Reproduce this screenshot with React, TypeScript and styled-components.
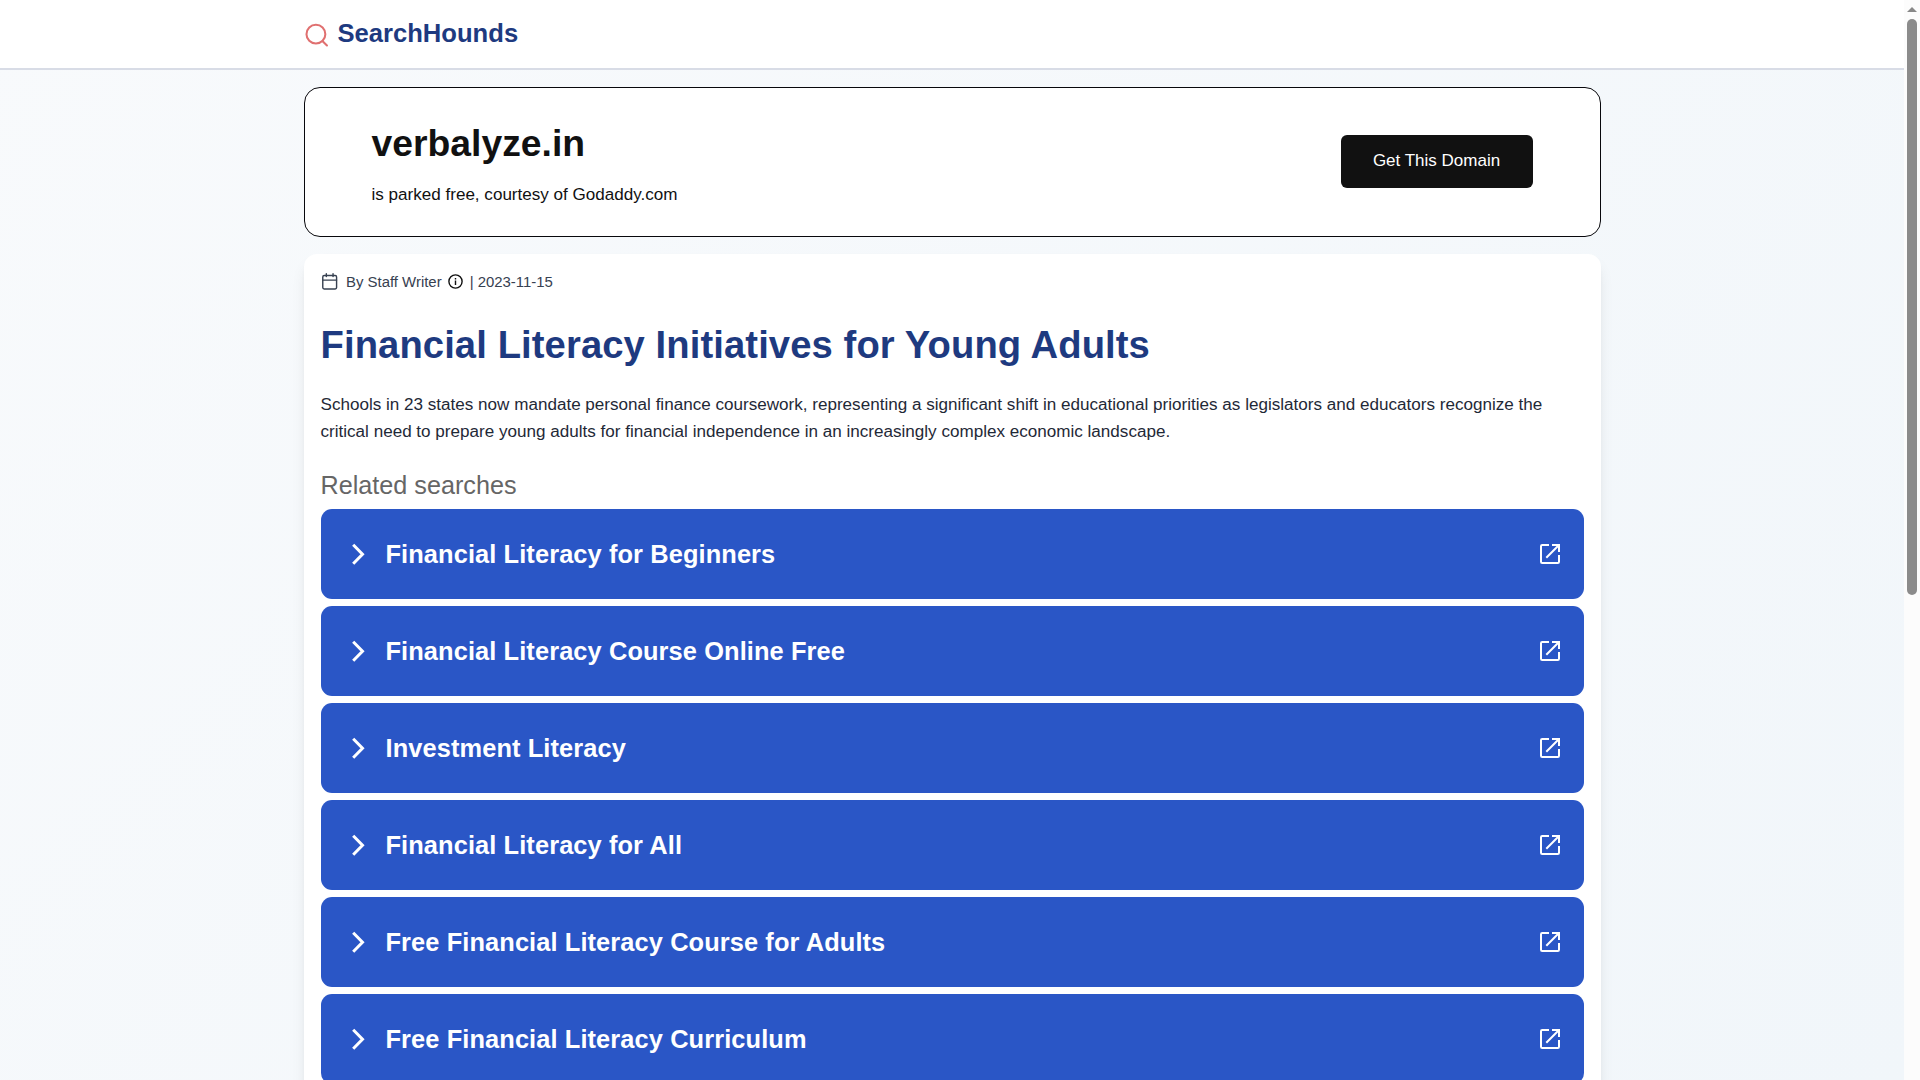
import React from "react";
import styled, { createGlobalStyle } from "styled-components";

const GlobalStyle = createGlobalStyle`
  * { box-sizing: border-box; }
  body { margin: 0; overflow: hidden; font-family: "Liberation Sans", Arial, sans-serif; }
  h1, h2, p { margin: 0; }
`;

const Window = styled.div`
  display: flex;
  width: 1920px;
  height: 1080px;
  overflow: hidden;
`;
const Page = styled.div`
  flex: 1;
  min-width: 0;
  display: flex;
  flex-direction: column;
  background: linear-gradient(135deg, #f8fafc, #f1f6fa);
`;
const ScrollBar = styled.div`
  width: 16px;
  background: #fcfcfc;
  display: flex;
  flex-direction: column;
  align-items: center;
`;
const ScrollArrow = styled.div`
  margin-top: 7px;
  border-left: 5px solid transparent;
  border-right: 5px solid transparent;
  border-bottom: 5px solid #888;
`;
const ScrollThumb = styled.div`
  margin-top: 7px;
  width: 10px;
  height: 576px;
  border-radius: 5px;
  background: #8b8b8b;
`;
const Header = styled.header`
  height: 70px;
  flex: none;
  background: #fff;
  border-bottom: 2px solid #d8dce6;
  display: flex;
  justify-content: center;
`;
const Container = styled.div`
  width: 1297px;
  margin: 0 auto;
`;
const Brand = styled(Container)`
  display: flex;
  align-items: flex-start;
  svg { margin-top: 22px; }
`;
const BrandName = styled.span`
  margin: 17px 0 0 8px;
  font-size: 25.6px;
  line-height: 32px;
  font-weight: 700;
  color: #1e3a80;
`;
const DomainCard = styled.section`
  margin-top: 17px;
  height: 149.5px;
  padding: 0 67px;
  display: flex;
  align-items: center;
  justify-content: space-between;
  background: #fff;
  border: 1px solid #08080c;
  border-radius: 16px;
`;
const DomainInfo = styled.div`
  padding-top: 5px;
`;
const DomainName = styled.h2`
  font-size: 37.3px;
  line-height: 45px;
  color: #111;
`;
const DomainNote = styled.p`
  margin-top: 16px;
  font-size: 17.07px;
  line-height: 25px;
  color: #111;
`;
const GetButton = styled.button`
  width: 192px;
  height: 53px;
  padding: 0 0 2px;
  border: 0;
  border-radius: 6px;
  background: #111;
  color: #fff;
  font: 17px "Liberation Sans", Arial, sans-serif;
`;
const Article = styled.article`
  margin-top: 17px;
  height: 900px;
  padding: 17px;
  background: #fff;
  border-radius: 13px;
  box-shadow: 0 10px 16px -3px rgba(0, 0, 0, 0.1), 0 4px 6px -4px rgba(0, 0, 0, 0.1);
`;
const Meta = styled.div`
  display: flex;
  align-items: center;
  height: 22px;
  font-size: 14.93px;
  color: #374151;
`;
const Writer = styled.span`
  margin: 0 6px 0 8.5px;
`;
const Published = styled.span`
  margin-left: 7px;
`;
const Title = styled.h1`
  margin-top: 28px;
  font-size: 38.2px;
  line-height: 48px;
  letter-spacing: 0.1px;
  color: #1e3a80;
`;
const Summary = styled.p`
  margin-top: 23.5px;
  font-size: 17.09px;
  line-height: 26.9px;
  color: #1f2937;
  white-space: nowrap;
`;
const Related = styled.div`
  margin-top: 21px;
  font-size: 25.2px;
  line-height: 36px;
  color: #666;
`;
const Results = styled.div`
  display: flex;
  flex-direction: column;
  gap: 6.6px;
  margin-top: 6px;
`;
const Result = styled.a`
  height: 90.35px;
  flex: none;
  display: flex;
  align-items: center;
  padding: 0 23px 0 29px;
  border-radius: 11px;
  background: #2a56c6;
  color: #fff;
`;
const ResultText = styled.span`
  flex: 1;
  margin: 1px 0 0 18px;
  font-size: 25.4px;
  font-weight: 700;
  letter-spacing: 0.1px;
`;

const searches = [
  "Financial Literacy for Beginners",
  "Financial Literacy Course Online Free",
  "Investment Literacy",
  "Financial Literacy for All",
  "Free Financial Literacy Course for Adults",
  "Free Financial Literacy Curriculum",
];

const SearchIcon = () => (
  <svg width="26" height="26" viewBox="0 0 24 24" fill="none" stroke="#e07070" strokeWidth="1.9" strokeLinecap="round">
    <circle cx="11" cy="11.2" r="8.7" />
    <path d="m21.2 21.7-4-4" />
  </svg>
);
const CalendarIcon = () => (
  <svg width="17" height="17" viewBox="0 0 24 24" fill="none" stroke="#374151" strokeWidth="2" strokeLinecap="round" strokeLinejoin="round">
    <path d="M7.5 1v4M17 1v4M2.5 10h19.5" />
    <rect x="2.5" y="3.5" width="19.5" height="19" rx="2" />
  </svg>
);
const InfoIcon = () => (
  <svg width="15" height="15" viewBox="0 0 15 15" fill="none" stroke="#111" strokeWidth="1.4">
    <circle cx="7.5" cy="7.5" r="6.6" />
    <path d="M7.5 6.6v4.3M7.5 4v1.5" />
  </svg>
);
const Chevron = () => (
  <svg width="18" height="24" viewBox="0 0 18 24" fill="none" stroke="#fff" strokeWidth="3">
    <path d="m3.2 2.8 9.3 9.5-9.3 9.5" />
  </svg>
);
const OpenIcon = () => (
  <svg width="22" height="22" viewBox="0 0 22 22" fill="none" stroke="#fff" strokeWidth="2">
    <path d="M10 2H3.2Q2 2 2 3.2V18.8Q2 20 3.2 20H18.8Q20 20 20 18.8V12" />
    <path d="M13 2h7v7M19.5 2.5 7.3 14.7" />
  </svg>
);

export default function App() {
  return (
    <Window>
      <GlobalStyle />
      <Page>
        <Header>
          <Brand>
            <SearchIcon />
            <BrandName>SearchHounds</BrandName>
          </Brand>
        </Header>
        <Container>
          <DomainCard>
            <DomainInfo>
              <DomainName>verbalyze.in</DomainName>
              <DomainNote>is parked free, courtesy of Godaddy.com</DomainNote>
            </DomainInfo>
            <GetButton>Get This Domain</GetButton>
          </DomainCard>
          <Article>
            <Meta>
              <CalendarIcon />
              <Writer>By Staff Writer</Writer>
              <InfoIcon />
              <Published>| 2023-11-15</Published>
            </Meta>
            <Title>Financial Literacy Initiatives for Young Adults</Title>
            <Summary>
              Schools in 23 states now mandate personal finance coursework, representing a significant shift in educational priorities as legislators and educators recognize the
              <br />
              critical need to prepare young adults for financial independence in an increasingly complex economic landscape.
            </Summary>
            <Related>Related searches</Related>
            <Results>
              {searches.map((text) => (
                <Result key={text}>
                  <Chevron />
                  <ResultText>{text}</ResultText>
                  <OpenIcon />
                </Result>
              ))}
            </Results>
          </Article>
        </Container>
      </Page>
      <ScrollBar>
        <ScrollArrow />
        <ScrollThumb />
      </ScrollBar>
    </Window>
  );
}
